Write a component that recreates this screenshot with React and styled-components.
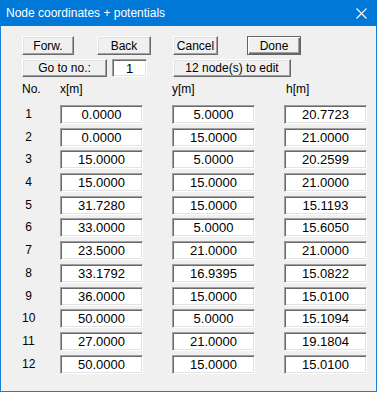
import React from "react";
import styled, { createGlobalStyle } from "styled-components";

const GlobalStyle = createGlobalStyle`
  html, body {
    margin: 0;
    padding: 0;
    background: #ffffff;
  }
  body {
    font-family: "Liberation Sans", Arial, sans-serif;
  }
`;

const Window = styled.div`
  width: 377px;
  height: 392px;
  box-sizing: border-box;
  border: 1px solid #1a7fd4;
  border-top: none;
  background: #f0f0f0;
  display: flex;
  flex-direction: column;
`;

const TitleBar = styled.div`
  height: 26px;
  margin: 0 -1px;
  background: #0078d7;
  color: #fff;
  display: flex;
  align-items: center;
  justify-content: space-between;
  padding: 0 10px 0 6px;
  font-size: 12px;
`;

const TitleText = styled.span`
  line-height: 26px;
  padding-bottom: 1px;
`;

const Body = styled.div`
  padding: 10px 0 0 21px;
  display: flex;
  flex-direction: column;
`;

const Row = styled.div`
  display: flex;
  align-items: center;
  height: ${(p) => p.h || 19}px;
  margin-top: ${(p) => p.mt || 0}px;
`;

const Button = styled.button`
  box-sizing: border-box;
  width: ${(p) => p.w}px;
  height: ${(p) => p.h || 19}px;
  margin-left: ${(p) => p.ml || 0}px;
  padding: 0;
  background: #f0f0f0;
  font-family: "Liberation Sans", Arial, sans-serif;
  font-size: 12px;
  color: #000;
  border: 1px solid;
  border-color: ${(p) => (p.def ? "#646464" : "#ffffff #696969 #696969 #ffffff")};
  box-shadow: ${(p) =>
    p.def
      ? "inset 1px 1px #ffffff, inset -1px -1px #696969, inset -2px -2px #a0a0a0"
      : "inset -1px -1px #a0a0a0, inset 1px 1px #e3e3e3"};
  display: flex;
  align-items: center;
  justify-content: center;
`;

const Field = styled.input`
  box-sizing: border-box;
  width: ${(p) => p.w || 83}px;
  height: ${(p) => p.h || 19}px;
  margin-left: ${(p) => p.ml || 0}px;
  padding: 0;
  background: #ffffff;
  border: 1px solid;
  border-color: #a0a0a0 #ffffff #ffffff #a0a0a0;
  box-shadow: inset 1px 1px #696969, inset -1px -1px #e3e3e3;
  font-family: "Liberation Sans", Arial, sans-serif;
  font-size: 13px;
  color: #000;
  text-align: center;
  outline: none;
`;

const Header = styled.div`
  display: grid;
  grid-template-columns: 38px 112px 114px 83px;
  margin-top: 5px;
  font-size: 12px;
  line-height: 14px;
  color: #000;
`;

const Grid = styled.div`
  display: grid;
  grid-template-columns: 9px 83px 83px 83px;
  column-gap: 29px;
  grid-auto-rows: 19px;
  row-gap: 3.7px;
  margin-top: 9px;
  font-size: 12px;
  align-items: center;
`;

const NumCell = styled.span`
  width: 13px;
  text-align: center;
  color: #000;
  margin-top: -1px;
`;

const rows = [
  ["0.0000", "5.0000", "20.7723"],
  ["0.0000", "15.0000", "21.0000"],
  ["15.0000", "5.0000", "20.2599"],
  ["15.0000", "15.0000", "21.0000"],
  ["31.7280", "15.0000", "15.1193"],
  ["33.0000", "5.0000", "15.6050"],
  ["23.5000", "21.0000", "21.0000"],
  ["33.1792", "16.9395", "15.0822"],
  ["36.0000", "15.0000", "15.0100"],
  ["50.0000", "5.0000", "15.1094"],
  ["27.0000", "21.0000", "19.1804"],
  ["50.0000", "15.0000", "15.0100"],
];

const CloseIcon = () => (
  <svg width="11" height="11" viewBox="0 0 11 11">
    <path d="M0.5 0.5 L10.5 10.5 M10.5 0.5 L0.5 10.5" stroke="#fff" strokeWidth="1.1" />
  </svg>
);

export default function App() {
  return (
    <>
      <GlobalStyle />
      <Window>
        <TitleBar>
          <TitleText>Node coordinates + potentials</TitleText>
          <CloseIcon />
        </TitleBar>
        <Body>
          <Row>
            <Button w={52}>Forw.</Button>
            <Button w={54} ml={23}>Back</Button>
            <Button w={45} ml={22}>Cancel</Button>
            <Button w={54} ml={29} def>Done</Button>
          </Row>
          <Row mt={4} h={18}>
            <Button w={85} h={18}>Go to no.:</Button>
            <Field w={35} h={18} ml={5} defaultValue="1" />
            <Button w={118} h={18} ml={26}>12 node(s) to edit</Button>
          </Row>
          <Header>
            <span>No.</span>
            <span>x[m]</span>
            <span>y[m]</span>
            <span>h[m]</span>
          </Header>
          <Grid>
            {rows.map((r, i) => (
              <React.Fragment key={i}>
                <NumCell>{i + 1}</NumCell>
                {r.map((v, j) => (
                  <Field key={j} defaultValue={v} readOnly />
                ))}
              </React.Fragment>
            ))}
          </Grid>
        </Body>
      </Window>
    </>
  );
}
